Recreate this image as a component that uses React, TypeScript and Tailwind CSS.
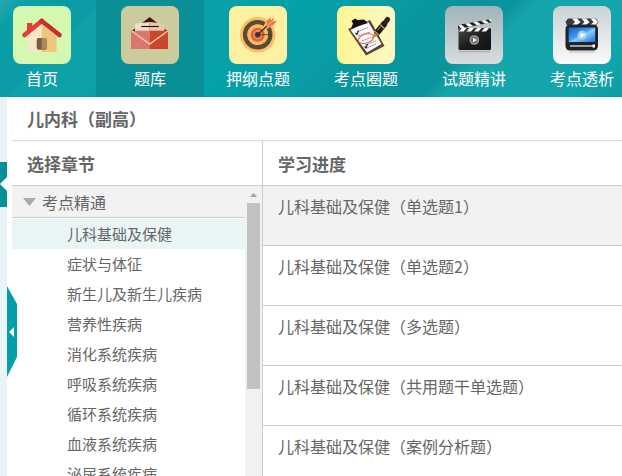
import { memo, useState } from 'react';
import type { ComponentType } from 'react';
import clsx from 'clsx';

function HomeIcon() {
  return (
    <svg viewBox="0 0 58 58" className="size-full" aria-hidden="true">
      <path d="M15 30 28.7 18v28H15z" fill="#f8e6c9" />
      <path d="M28.7 18 43.5 30v16H28.7z" fill="#efc67c" />
      <path d="M14 17h5.3v6L14 27z" fill="#e23b40" />
      <path d="M11.5 29 28.7 15" stroke="#e8393f" strokeWidth="4.6" strokeLinecap="round" />
      <path d="M28.7 15 46.5 29" stroke="#c4302e" strokeWidth="4.6" strokeLinecap="round" />
      <rect x="23.7" y="32" width="10" height="11.7" rx="2" fill="#7b5a3b" />
      <path d="M28.7 32h3a2 2 0 0 1 2 2v7.7a2 2 0 0 1-2 2h-3z" fill="#a98a5d" />
    </svg>
  );
}

function EnvelopeIcon() {
  return (
    <svg viewBox="0 0 58 58" className="size-full" aria-hidden="true">
      <path d="M10 25.5 28.7 11 47 25.5z" fill="#4b120b" />
      <path d="M14 17.5 28.7 16v14H14z" fill="#eedcc6" />
      <path d="M28.7 16 43.5 17.5V30H28.7z" fill="#e4c9a6" />
      <path d="M20.3 20.5h17.5" stroke="#241010" strokeWidth="1.1" />
      <path d="M10 24.7h18.7V43H10z" fill="#d9766e" />
      <path d="M28.7 24.7H47V43H28.7z" fill="#cd452b" />
      <path d="m10.7 25 18 13 18-13" fill="none" stroke="#f0c9ae" strokeWidth="1.5" />
    </svg>
  );
}

function TargetIcon() {
  return (
    <svg viewBox="0 0 58 58" className="size-full" aria-hidden="true">
      <circle cx="28.7" cy="28.7" r="17.8" fill="#f9c163" />
      <circle cx="28.7" cy="28.7" r="12.6" fill="none" stroke="#5d4938" strokeWidth="4.4" />
      <circle cx="28.7" cy="28.7" r="10.3" fill="#f5bb55" />
      <circle cx="28.7" cy="28.7" r="7" fill="#e4593f" />
      <circle cx="28.7" cy="28.7" r="4.6" fill="#ee8a62" />
      <circle cx="28.7" cy="28.7" r="2.8" fill="#3b3540" />
      <path d="m34.5 20 3-5.500 5 5.500-5 3z" fill="#f9c163" />
      <path d="M28.7 28.7h14" stroke="#3c2b25" strokeWidth=".7" />
      <path d="M28.7 28.7 40 18" stroke="#3c2b25" strokeWidth="1.2" />
      <path d="m37.5 20.5.5-6 3.500-3.500v3.500l3.500-3-1 4 4-1-3 4-4.500 2z" fill="#ef7445" />
      <path d="m38 20 6.500-5.500" stroke="#fbd08a" strokeWidth=".7" />
    </svg>
  );
}

function ClipboardIcon() {
  return (
    <svg viewBox="0 0 58 58" className="size-full" aria-hidden="true">
      <path d="m11 23 22-9 14.5 26L29 49.5z" fill="#594530" />
      <path d="m13.5 24 17.5-8.500L44.500 38 30 46.500z" fill="#fdfbfa" />
      <path d="m14 22.500 2-5-1.500-2.500 3.500-2.500 2.500 1.500 6.500-.5 4 3.500z" fill="#17120f" />
      <path d="m20 26 11-4.500M21 30l12-4M25 35l10-4M28 39l11-4M30 42l10-4.500" stroke="#8b878c" strokeWidth="1" strokeDasharray="2 .7" />
      <path d="m18.500 27 1.500 1.500 1.500-4M27.500 40.500l1.500 1.500 1.500-4" fill="none" stroke="#222" strokeWidth="1.2" />
      <ellipse cx="29" cy="32.500" rx="8" ry="4.500" transform="rotate(-18 29 32.5)" fill="none" stroke="#e76b6b" strokeWidth="1.2" />
      <path d="m34.500 33 3.500-7.500 4 3.500z" fill="#c98f35" />
      <path d="m39 28 9-11" stroke="#1b1614" strokeWidth="6" />
      <path d="m47.500 17.500 3-4" stroke="#2b211c" strokeWidth="5" strokeLinecap="round" />
      <path d="m37.500 25 4.500 4M43 18.500l5 4.500" stroke="#d7a545" strokeWidth="1.2" />
      <path d="m43.500 20.500-3 4" stroke="#a49b90" strokeWidth="1" />
    </svg>
  );
}

function ClapperIcon() {
  return (
    <svg viewBox="0 0 58 58" className="size-full" aria-hidden="true">
      <defs>
        <linearGradient id="clapper" x1="0" y1="0" x2="1" y2="1">
          <stop offset="0" stopColor="#494949" />
          <stop offset=".5" stopColor="#1e1e1e" />
          <stop offset="1" stopColor="#111" />
        </linearGradient>
      </defs>
      <path d="m13 19 33-6v3.500L13 23z" fill="#252525" />
      <path d="m13 19 3-.6 4 3.200-4 .8zM20 17.700l4-.7 4 3-4 .8zM28 16.300l4-.7 4 2.800-4 .8zM36 14.800l4-.7 4 2.800-4 .8zM43.500 13.500 46 13v3z" fill="#fff" />
      <rect x="13.500" y="22" width="32.500" height="22" rx="1.5" fill="url(#clapper)" />
      <path d="M17 22h4.500l-3 3.500H14zM24.500 22H29l-3 3.500h-4.500zM32 22h4.500l-3 3.500H29zM39.500 22H44l-3 3.500h-4.500z" fill="#fff" />
      <circle cx="29.3" cy="34" r="4.8" fill="#a2a2a2" />
      <circle cx="29.3" cy="34" r="3.4" fill="#6b6b6b" />
      <path d="m28 31.500 4 2.500-4 2.500z" fill="#eee" />
      <path d="M14 45.500h31" stroke="#8f9293" strokeWidth="1.5" opacity=".5" />
    </svg>
  );
}

function PlayerIcon() {
  return (
    <svg viewBox="0 0 58 58" className="size-full" aria-hidden="true">
      <defs>
        <linearGradient id="screen" x1="0" y1="0" x2="1" y2="1">
          <stop offset="0" stopColor="#1260c8" />
          <stop offset=".45" stopColor="#3f9cf0" />
          <stop offset=".55" stopColor="#8dcbfb" />
          <stop offset="1" stopColor="#1c71d4" />
        </linearGradient>
      </defs>
      <path d="M15 12.500h28l2.500 3.500-2.500 3.500H14L12.500 16z" fill="#3a3a3b" />
      <path d="M19 12.500h5l3.500 3.500-3.500 3h-5l3-3zM28.500 12.500h4.500l3.500 3.500-3.500 3h-4.500l3-3zM37.500 12.500H42l3 3.500-3 3h-4.500l3-3z" fill="#fff" />
      <rect x="12.500" y="18.500" width="32.500" height="26" rx="4.500" fill="#202329" />
      <path d="M15.700 21.500h26.500V36H15.700z" fill="url(#screen)" />
      <circle cx="29" cy="29" r="4.500" fill="#c7dbea" opacity=".7" />
      <path d="m27.500 26.500 4.500 2.500-4.500 2.500z" fill="#fff" />
      <path d="M17 40h24" stroke="#c3ccd4" strokeWidth="1.500" />
      <path d="M39.500 38.500h2.500v3h-2.500z" fill="#fff" />
      <path d="M16 46h26" stroke="#aaaeb1" strokeWidth="1.500" opacity=".5" />
    </svg>
  );
}

interface NavItem {
  label: string;
  icon: ComponentType;
  tile: string;
}

const navItems: NavItem[] = [
  { label: '首页', icon: HomeIcon, tile: 'bg-[#d5f8b0]' },
  { label: '题库', icon: EnvelopeIcon, tile: 'bg-[#cccb9d]' },
  { label: '押纲点题', icon: TargetIcon, tile: 'bg-[#fdf0a3]' },
  { label: '考点圈题', icon: ClipboardIcon, tile: 'bg-linear-to-r from-[#fff592] to-[#fdf8c4]' },
  { label: '试题精讲', icon: ClapperIcon, tile: 'bg-linear-to-b from-[#a0b4ba] to-[#d9dddd]' },
  { label: '考点透析', icon: PlayerIcon, tile: 'bg-linear-to-b from-[#c9d2d4] to-[#fafafa]' },
];

const chapters = [
  '儿科基础及保健',
  '症状与体征',
  '新生儿及新生儿疾病',
  '营养性疾病',
  '消化系统疾病',
  '呼吸系统疾病',
  '循环系统疾病',
  '血液系统疾病',
  '泌尿系统疾病',
];

const progress = [
  '儿科基础及保健（单选题1）',
  '儿科基础及保健（单选题2）',
  '儿科基础及保健（多选题）',
  '儿科基础及保健（共用题干单选题）',
  '儿科基础及保健（案例分析题）',
];

const TopNav = memo(function TopNav() {
  return (
    <header className="shrink-0 overflow-hidden bg-[linear-gradient(135deg,#27a9b0_0%,#0a9ea6_4%,#0b9ba4_14%,#10a1a8_15%,#05a0a8_44%,#0a9ca4_54%,#08959c_62%,#0b949b_72%,#17a5ac_75%,#13a5ad_92%,#0d9ca4_100%)]">
      <nav className="-ml-3 flex">
        {navItems.map(({ label, icon: Icon, tile }) => (
          <a
            key={label}
            href="#"
            className={clsx(
              'flex h-[97px] w-[108px] shrink-0 flex-col items-center pt-1.5 text-base text-white',
              label === '题库' && 'bg-[#0b8b91]/80'
            )}
          >
            <span className={clsx('size-[58px] rounded-lg', tile)}>
              <Icon />
            </span>
            <span className="mt-0.5 leading-6">{label}</span>
          </a>
        ))}
      </nav>
    </header>
  );
});

function SideHandles() {
  return (
    <>
      <button type="button" aria-label="展开" className="absolute top-[65px] left-0 h-[45px] w-[7px] bg-[#03929a]">
        <svg viewBox="0 0 7 45" className="size-full" aria-hidden="true">
          <path d="M7 15v14L0 22z" fill="#fff" />
        </svg>
      </button>
      <button type="button" aria-label="收起" className="absolute top-[189px] left-[7px] h-[91px] w-[10px]">
        <svg viewBox="0 0 10 91" className="size-full" aria-hidden="true">
          <path d="M0 0 10 18v53L0 91z" fill="#009fa9" />
          <path d="M7 41v10l-5-5z" fill="#fff" />
        </svg>
      </button>
    </>
  );
}

function ChapterTree() {
  const [active, setActive] = useState(0);

  return (
    <div className="flex min-h-0 flex-1">
      <div className="min-w-0 flex-1 overflow-hidden">
        <button
          type="button"
          className="mb-px flex h-8 w-full items-center gap-1.5 border-b border-[#cccccc] bg-[#f2f2f2] pl-[11px] text-base"
        >
          <svg viewBox="0 0 13 8" className="h-2 w-[13px]" aria-hidden="true">
            <path d="M0 0h13L6.500 8z" fill="#aaaaaa" />
          </svg>
          考点精通
        </button>
        <ul>
          {chapters.map((name, i) => (
            <li key={name}>
              <button
                type="button"
                onClick={() => setActive(i)}
                className={clsx('block h-[30px] w-full pl-[55px] text-left text-[15px]', i === active && 'bg-[#e9f4f5]')}
              >
                {name}
              </button>
            </li>
          ))}
        </ul>
      </div>
      <div className="flex w-[17px] flex-col items-center bg-[#f1f1f1]" aria-hidden="true">
        <svg viewBox="0 0 17 17" className="size-[17px]">
          <path d="M5 11h7L8.500 7z" fill="#a3a3a3" />
        </svg>
        <div className="h-[186px] w-[13px] bg-[#c1c1c1]" />
      </div>
    </div>
  );
}

export default function App() {
  return (
    <div className="flex h-screen flex-col overflow-hidden bg-[#e9f4f6] font-['Noto_Sans_CJK_SC',sans-serif] text-[#666666]">
      <TopNav />
      <main className="relative flex min-h-0 flex-1 flex-col pl-[7px]">
        <SideHandles />
        <div className="flex min-h-0 flex-1 flex-col bg-white pl-[5px]">
          <h1 className="h-11 shrink-0 border-b border-[#dddddd] pl-[15px] text-[17px] leading-[44px] font-bold shadow-xs">
            儿内科（副高）
          </h1>
          <div className="flex min-h-0 flex-1">
            <section className="flex w-[251px] shrink-0 flex-col border-r border-[#cccccc]">
              <h2 className="h-[45px] shrink-0 border-b border-[#cccccc] pl-[15px] text-[17px] leading-[46px] font-bold">
                选择章节
              </h2>
              <ChapterTree />
            </section>
            <section className="min-w-0 flex-1 overflow-hidden">
              <h2 className="h-[45px] border-b border-[#cccccc] pl-[15px] text-[17px] leading-[46px] font-bold">
                学习进度
              </h2>
              <ul>
                {progress.map((title, i) => (
                  <li
                    key={title}
                    className={clsx('h-[60px] border-b border-[#cccccc] pt-2 pl-[15px] leading-6', i === 0 && 'bg-[#f2f2f2]')}
                  >
                    <a href="#">{title}</a>
                  </li>
                ))}
              </ul>
            </section>
          </div>
        </div>
      </main>
    </div>
  );
}
